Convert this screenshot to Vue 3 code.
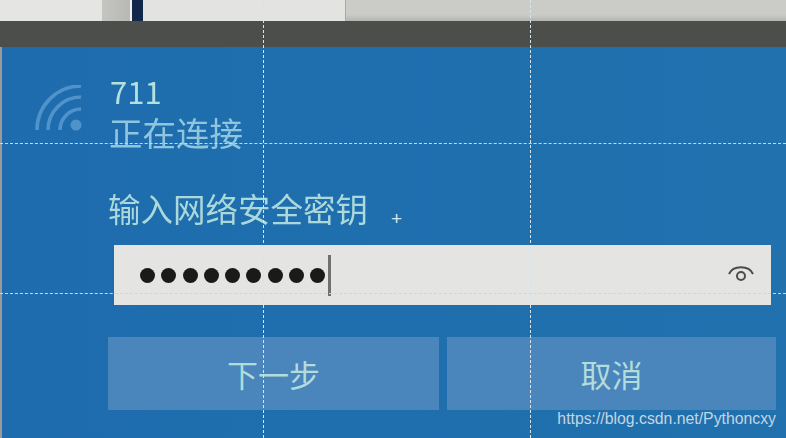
<script setup>
const dots = Array.from({ length: 9 }, (_, i) => i)
</script>

<template>
  <div class="screen">
    <div class="taskbar">
      <div class="seg light"></div>
      <div class="seg mid"></div>
      <div class="seg navy"></div>
      <div class="seg pale"></div>
      <div class="seg rest"></div>
    </div>
    <div class="band"></div>
    <div class="panel">
      <div class="network">
        <svg class="wifi" viewBox="0 0 50 50" width="50" height="50" fill="none" stroke="#4f93ca" stroke-width="3.6">
          <path d="M3 45 A44 44 0 0 1 47 1" />
          <path d="M14 45 A33 33 0 0 1 47 12" />
          <path d="M26 45 A21 21 0 0 1 47 24" />
          <circle cx="42" cy="40" r="5.5" fill="#4f93ca" stroke="none" />
        </svg>
        <div class="names">
          <div class="ssid">711</div>
          <div class="state">正在连接</div>
        </div>
      </div>
      <div class="label">输入网络安全密钥</div>
      <div class="field">
        <div class="dots">
          <span v-for="d in dots" :key="d" class="dot"></span>
          <span class="caret"></span>
        </div>
        <svg class="eye" viewBox="0 0 30 24" width="30" height="24" fill="none" stroke="#4a4d4e" stroke-width="2">
          <path d="M3 11 C7 2 23 2 27 11" />
          <circle cx="15" cy="13" r="4" />
        </svg>
      </div>
      <div class="actions">
        <button class="btn">下一步</button>
        <button class="btn">取消</button>
      </div>
    </div>

    <div class="guide v" style="left: 263px"></div>
    <div class="guide v" style="left: 530px"></div>
    <div class="guide h" style="top: 143px"></div>
    <div class="guide h" style="top: 293px"></div>
    <div class="cross">+</div>
    <div class="mark">https://blog.csdn.net/Pythoncxy</div>
  </div>
</template>

<style>
html, body {
  margin: 0;
  padding: 0;
  overflow: hidden;
}
</style>

<style scoped>
.screen {
  position: relative;
  width: 786px;
  height: 438px;
  overflow: hidden;
  font-family: "Noto Sans CJK SC", "Liberation Sans", sans-serif;
  background: #1f6fae;
}
.taskbar {
  display: flex;
  height: 21px;
}
.seg { height: 100%; }
.light { width: 102px; background: #e5e5e3; }
.mid { width: 28px; background: linear-gradient(90deg, #c4c4c0, #b8b8b4); }
.navy {
  width: 13px;
  background: #12284a;
  border-left: 2px solid #f0f0ee;
  box-sizing: border-box;
}
.pale { width: 203px; background: #e3e3e1; border-right: 1px solid #a9a9a6; box-sizing: border-box; }
.rest { flex: 1; background: linear-gradient(180deg, #cbcbc8 70%, #b4b4b0); }
.band {
  height: 26px;
  background: #4c4e4c;
}
.panel {
  height: 391px;
  box-sizing: border-box;
  padding: 24px 10px 0 108px;
  background: linear-gradient(90deg, #9a9a9a 0, #9a9a9a 2px, #1e6cad 2px, #2071ae 100%);
}
.network {
  position: relative;
  height: 122px;
  padding-left: 2px;
}
.wifi {
  position: absolute;
  left: -74px;
  top: 14px;
  filter: blur(0.5px);
}
.ssid {
  font-size: 31px;
  line-height: 40px;
  color: #b4e0dd;
  filter: blur(0.4px);
}
.state {
  font-size: 33.5px;
  line-height: 40px;
  margin-top: 1px;
  margin-left: -1px;
  color: #8fc6de;
  filter: blur(0.4px);
}
.label {
  font-size: 32.5px;
  line-height: 44px;
  margin-top: -7px;
  color: #abd8da;
  white-space: nowrap;
  filter: blur(0.4px);
}
.field {
  display: flex;
  align-items: center;
  justify-content: space-between;
  width: 657px;
  height: 60px;
  margin: 15px 0 0 6px;
  padding: 0 15px 0 26px;
  box-sizing: border-box;
  background: #e4e5e2;
}
.dots {
  display: flex;
  align-items: center;
  gap: 6.3px;
}
.dot {
  width: 15px;
  height: 15px;
  border-radius: 50%;
  background: #1a1a1a;
}
.caret {
  width: 3px;
  height: 41px;
  margin-left: -4px;
  background: #6f7171;
}
.eye { display: block; }
.actions {
  display: flex;
  gap: 8px;
  margin-top: 32px;
}
.btn {
  height: 73px;
  padding: 0;
  border: 0;
  font-family: inherit;
  font-size: 31px;
  color: #b2dcdb;
  background: #4a86bb;
}
.btn:first-child { width: 331px; }
.btn:last-child { width: 329px; }
.guide {
  position: absolute;
  pointer-events: none;
}
.guide.v {
  top: 0;
  bottom: 0;
  width: 0;
  border-left: 1px dashed #d8e4ea;
}
.guide.h {
  left: 0;
  right: 0;
  height: 0;
  border-top: 1px dashed #c4d8e6;
}
.cross {
  position: absolute;
  left: 391px;
  top: 207px;
  font-family: "Liberation Sans", sans-serif;
  font-size: 19px;
  line-height: 24px;
  color: #d5e4ee;
}
.mark {
  position: absolute;
  right: 10px;
  top: 408px;
  font-family: "Liberation Sans", Arial, sans-serif;
  font-size: 15.8px;
  line-height: 22px;
  color: #c4d5e4;
}
</style>
